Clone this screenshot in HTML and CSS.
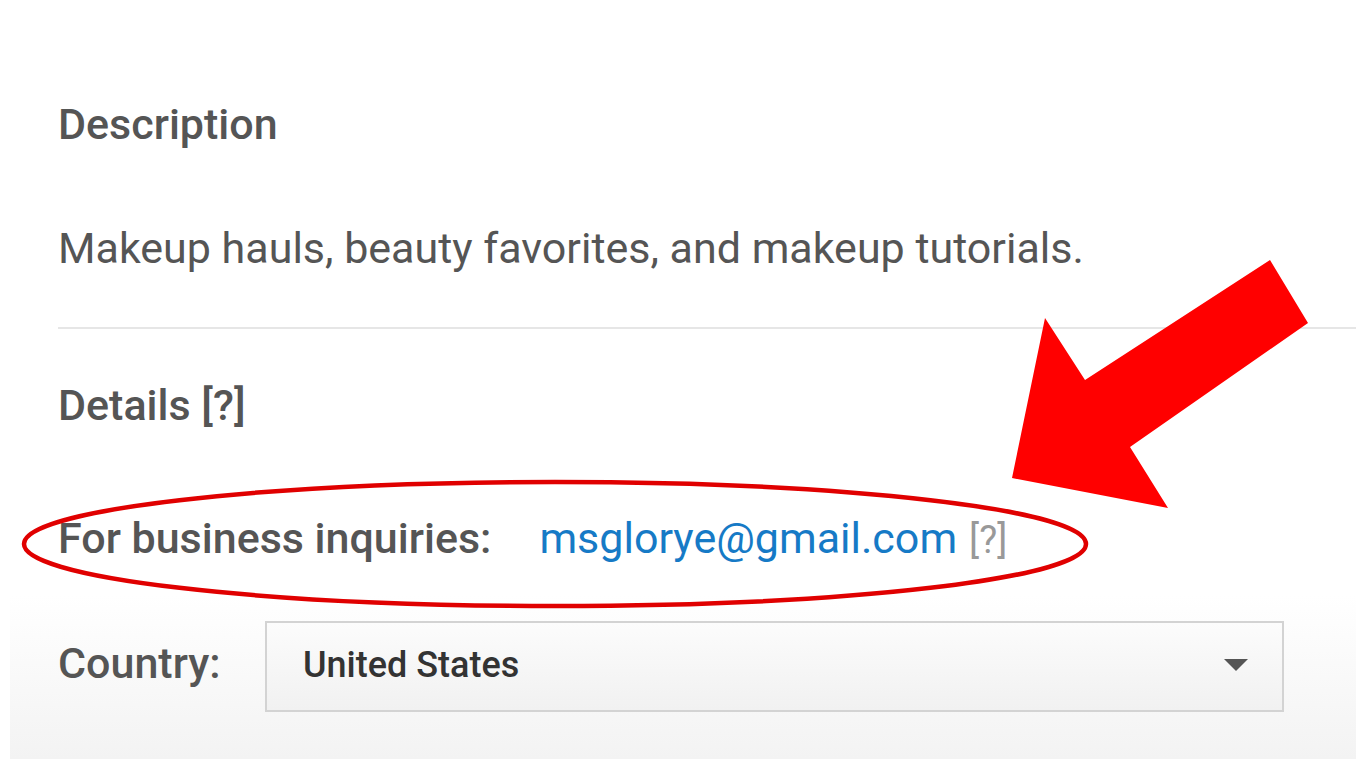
FILE: index.html
```html
<!DOCTYPE html>
<html>
<head>
<meta charset="utf-8">
<link rel="stylesheet" href="styles.css">
</head>
<body>
<div class="page">
  <section class="about">
    <h2 class="label desc-label">Description</h2>
    <p class="desc-text">Makeup hauls, beauty favorites, and makeup tutorials.</p>
    <hr class="divider">
    <h2 class="label details-label">Details [?]</h2>
    <div class="business">
      <span class="label">For business inquiries:</span>
      <a class="email" href="#">msglorye@gmail.com</a>
      <span class="help">[?]</span>
    </div>
  </section>
  <div class="country-box">
    <div class="country-row">
      <span class="label">Country:</span>
      <div class="select">
        <span class="select-value">United States</span>
        <span class="caret"></span>
      </div>
    </div>
  </div>
  <svg class="annotation" width="1366" height="768" viewBox="0 0 1366 768">
    <ellipse cx="555" cy="544" rx="531" ry="62" fill="none" stroke="#e00000" stroke-width="4.5"/>
    <polygon points="1270,260 1308,323 1130,447 1168,508 1012,478 1045,318 1085,380" fill="#ff0000"/>
  </svg>
</div>
</body>
</html>
```
FILE: styles.css
```css
html, body {
  margin: 0;
  padding: 0;
  background: #ffffff;
}
body {
  font-family: Roboto, "Liberation Sans", sans-serif;
  color: #555555;
  width: 1366px;
  height: 768px;
  overflow: hidden;
}
.page {
  position: relative;
  width: 1366px;
  height: 768px;
}
.about {
  padding: 99px 0 0 58px;
}
.label {
  font-size: 43px;
  font-weight: 500;
  color: #555555;
  margin: 0;
  line-height: 50px;
}
.desc-text {
  margin: 74px 0 0 0;
  font-size: 43px;
  line-height: 50px;
  color: #555555;
}
.divider {
  margin: 54px 0 0 0;
  border: 0;
  height: 2px;
  background: #e6e6e6;
  width: 1298px;
}
.details-label {
  margin-top: 51px;
}
.business {
  margin-top: 83px;
  display: flex;
  align-items: baseline;
  line-height: 50px;
}
.email {
  font-size: 43px;
  color: #167ac6;
  text-decoration: none;
  margin-left: 48px;
}
.help {
  font-size: 38px;
  color: #999999;
  margin-left: 12px;
}
.country-box {
  margin: 12px 10px 0 10px;
  height: 182px;
  background: linear-gradient(#ffffff 10%, #f3f3f3);
  padding: 44px 0 0 48px;
  box-sizing: border-box;
  width: 1346px;
}
.country-row {
  display: flex;
  align-items: center;
}
.country-row .label {
  width: 207px;
  flex: none;
  margin-bottom: 8px;
}
.select {
  width: 1019px;
  height: 91px;
  box-sizing: border-box;
  border: 2px solid #d3d3d3;
  background: linear-gradient(#fcfcfc, #f1f1f1);
  display: flex;
  align-items: center;
  padding: 0 34px 4px 36px;
}
.select-value {
  font-size: 36px;
  font-weight: 500;
  color: #333333;
  flex: 1;
}
.caret {
  width: 0;
  height: 0;
  border-left: 12px solid transparent;
  border-right: 12px solid transparent;
  border-top: 12px solid #555555;
}
.annotation {
  position: absolute;
  left: 0;
  top: 0;
  pointer-events: none;
}
```
